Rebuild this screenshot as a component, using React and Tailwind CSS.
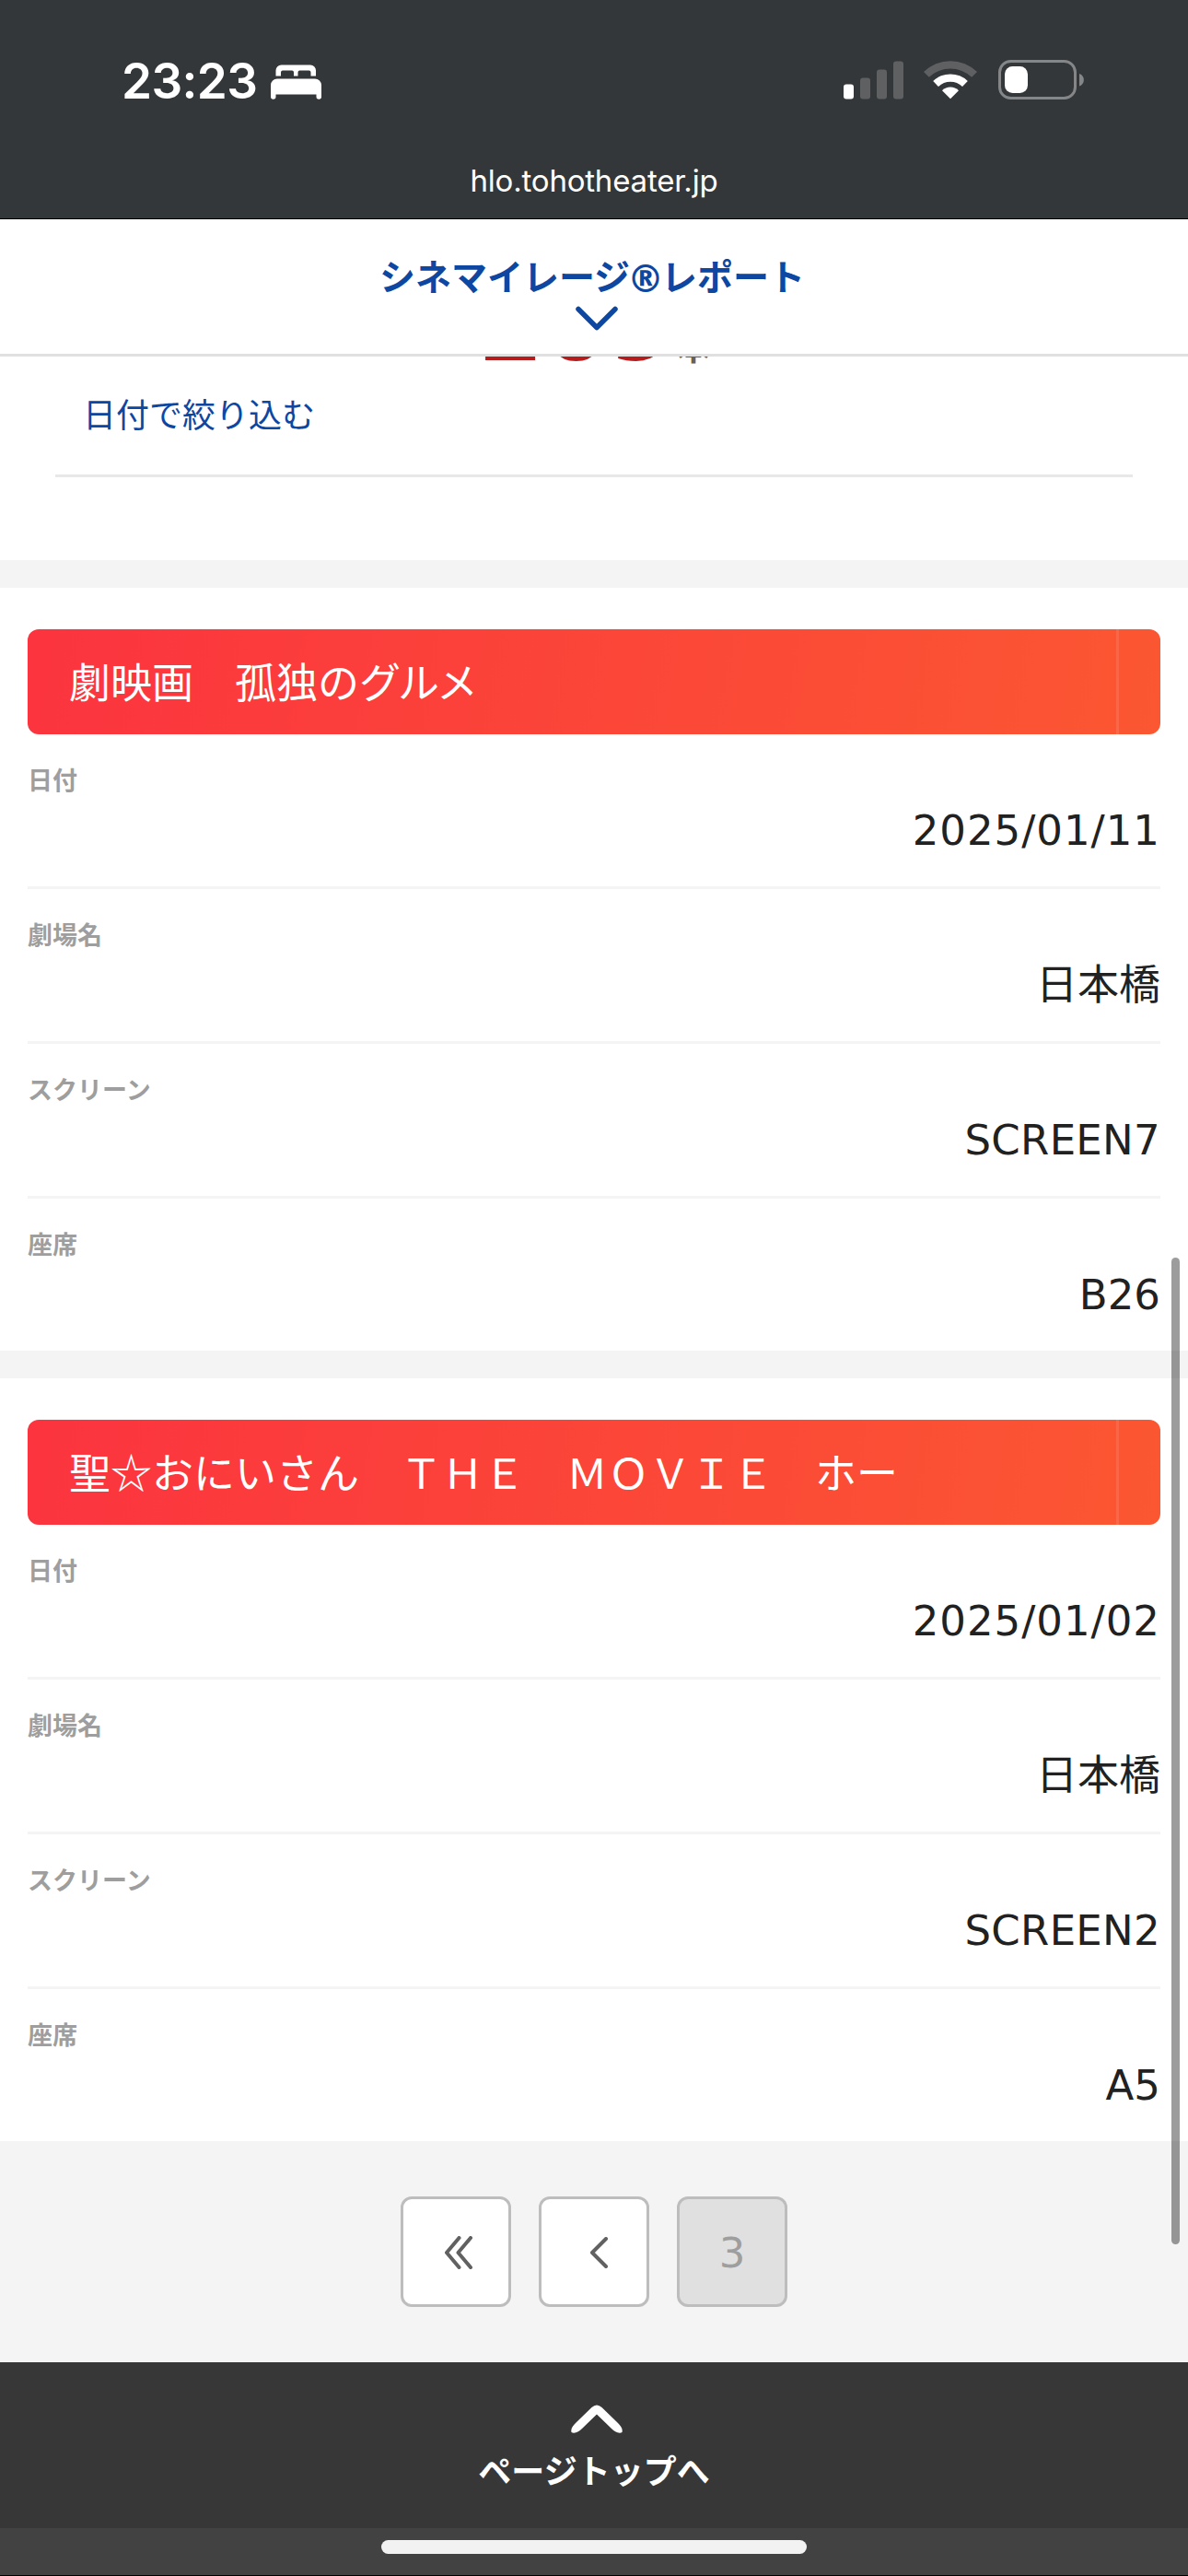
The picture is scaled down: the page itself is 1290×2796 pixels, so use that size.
import React from 'react';

const movies = [
  {
    title: '劇映画　孤独の',
    titleEnd: 'グルメ',
    rows: [
      { label: '日付', value: '2025/01/11', tracking: 'tracking-[1px]' },
      { label: '劇場名', value: '日本橋' },
      { label: 'スクリーン', value: 'SCREEN7', tracking: 'tracking-[0.3px]' },
      { label: '座席', value: 'B26' },
    ],
  },
  {
    title: '聖☆おにいさん　ＴＨＥ　ＭＯＶＩＥ　ホー',
    rows: [
      { label: '日付', value: '2025/01/02', tracking: 'tracking-[1px]' },
      { label: '劇場名', value: '日本橋' },
      { label: 'スクリーン', value: 'SCREEN2', tracking: 'tracking-[0.3px]' },
      { label: '座席', value: 'A5' },
    ],
  },
];

const BedIcon = () => (
  <svg width="55" height="38" viewBox="0 0 55 38" fill="#fff">
    <path d="M5.500 12.500V6.500A6 6 0 0 1 11.500 .5H43A6 6 0 0 1 49 6.500V12.500H43.500V8.500A2 2 0 0 0 41.500 6.500H31.500A2 2 0 0 0 29.500 8.500V12.500H25V8.500A2 2 0 0 0 23 6.500H13A2 2 0 0 0 11 8.500V12.500Z" />
    <path d="M0 22.500A7 7 0 0 1 7 15.500H48A7 7 0 0 1 55 22.500V35A2.500 2.500 0 0 1 49.500 35V32.500H5.500V35A2.500 2.500 0 0 1 0 35Z" />
  </svg>
);

const SignalIcon = () => (
  <svg width="65" height="42" viewBox="0 0 65 42">
    <rect x="0" y="25.500" width="11" height="16" rx="3" fill="#fff" />
    <rect x="18" y="18.500" width="11" height="23" rx="3" fill="#5f6062" />
    <rect x="36" y="9.500" width="11" height="32" rx="3" fill="#5f6062" />
    <rect x="54" y="0.500" width="11" height="41" rx="3" fill="#5f6062" />
  </svg>
);

const WifiIcon = () => (
  <svg width="58" height="43" viewBox="0 0 58 43">
    <path d="M0 13A41.500 41.500 0 0 1 58 13L52.200 18.800A33.500 33.500 0 0 0 5.800 18.800Z" fill="#5f6062" />
    <path d="M10.200 23A27 27 0 0 1 47.800 23L42 29A19 19 0 0 0 16 29Z" fill="#fff" />
    <path d="M20 33.200A13 13 0 0 1 38 33.200L29 42.300Z" fill="#fff" />
  </svg>
);

const BatteryIcon = () => (
  <svg width="94" height="43" viewBox="0 0 94 43">
    <rect x="1.500" y="1.500" width="82" height="40" rx="12" fill="none" stroke="#848688" strokeWidth="3" />
    <rect x="7" y="7" width="25" height="29" rx="8.500" fill="#fff" />
    <path d="M88 15C94.500 17 94.500 26.500 88 28.500Z" fill="#848688" />
  </svg>
);

const MovieCard = ({ title, titleEnd, rows }) => (
  <section className="bg-white px-[30px] pt-[45px]">
    <div className="flex h-[114px] justify-between overflow-hidden rounded-xl bg-[linear-gradient(100deg,#fb343f,#fb5732)] pl-[45px]">
      <h2 className="text-[45px] leading-[112px] whitespace-pre text-white">
        {title}
        {titleEnd && <span className="tracking-[-3px]">{titleEnd}</span>}
      </h2>
      <div className="w-12 border-l-[3px] border-white/10" />
    </div>
    <dl>
      {rows.map((row) => (
        <div
          key={row.label}
          className="h-[168px] border-b-[3px] border-[#f4f4f4] pt-7 last:h-[165px] last:border-b-0"
        >
          <dt className="text-[27px] leading-[41px] font-bold text-[#9e9e9e]">{row.label}</dt>
          <dd
            className={`mt-0.5 text-right font-['DejaVu_Sans','Noto_Sans_CJK_JP',sans-serif] text-[45px] leading-[68px] text-[#212121] ${row.tracking || ''}`}
          >
            {row.value}
          </dd>
        </div>
      ))}
    </dl>
  </section>
);

const App = () => {
  return (
    <div className="relative flex h-[2796px] w-[1290px] flex-col overflow-hidden bg-[#f4f4f4] font-['Noto_Sans_CJK_JP',sans-serif]">
      {/* Status bar */}
      <div className="h-[238px] border-b border-black bg-[#343739] font-[Inter,sans-serif] text-white">
        <div className="flex h-[173px] items-center justify-between pr-[112px] pl-[132px]">
          <div className="flex items-center gap-[15px] pt-1">
            <span className="text-[53px] leading-none font-semibold tracking-[-0.6px]">23:23</span>
            <BedIcon />
          </div>
          <div className="flex items-center">
            <SignalIcon />
            <div className="ml-[22px]"><WifiIcon /></div>
            <div className="ml-[23px]"><BatteryIcon /></div>
          </div>
        </div>
        <p className="text-center text-[33px] leading-[46px] tracking-[-0.2px]">hlo.tohotheater.jp</p>
      </div>

      {/* Page header */}
      <header className="flex h-[149px] flex-col items-center border-b-[3px] border-[#e0e0e0] bg-white pt-[31px] text-[#0d47a1]">
        <h1 className="mr-1 flex h-[58px] items-center text-[39px] leading-[58px] font-bold">
          <span>シネマイレージ</span>
          <span className="flex w-[34px] justify-center pt-2.5 font-['DejaVu_Sans',sans-serif] text-[40px] leading-none">®</span>
          <span>レポート</span>
        </h1>
        <svg className="mt-[5px] ml-1.5" width="46" height="27" viewBox="0 0 46 27" fill="none" stroke="currentColor" strokeWidth="5.500" strokeLinecap="round" strokeLinejoin="round">
          <path d="M3 3.500L23 23.500L43 3.500" />
        </svg>
      </header>

      {/* Summary */}
      <section className="h-[221px] bg-white px-[60px]">
        <div className="flex h-2.5 items-end justify-center overflow-hidden">
          <p className="-mb-[10px] font-['DejaVu_Sans','Noto_Sans_CJK_JP',sans-serif] text-[102px] leading-none font-bold text-[#b71c1c]">
            209<span className="ml-[3px] text-[36px] text-[#616161]">本</span>
          </p>
        </div>
        <div className="h-[121px] border-b-[3px] border-[#e8e8e8] px-[30px] pt-6">
          <a href="#" className="block text-[36px] leading-[54px] text-[#0d47a1]">日付で絞り込む</a>
        </div>
      </section>

      {/* Viewing history */}
      <main className="mt-[30px] flex flex-col gap-[30px]">
        {movies.map((movie) => (
          <MovieCard key={movie.title} {...movie} />
        ))}
      </main>

      {/* Pagination */}
      <nav className="flex h-[240px] items-center justify-center gap-[30px]">
        <button className="flex size-[120px] items-center justify-center rounded-xl border-[3px] border-[#bdbdbd] bg-white">
          <svg className="mt-0.5 ml-1.5" width="30" height="36" viewBox="0 0 30 36" fill="none" stroke="#616161" strokeWidth="4" strokeLinecap="round" strokeLinejoin="round">
            <path d="M15.500 2L2 18L15.500 34M28 2L14.500 18L28 34" />
          </svg>
        </button>
        <button className="flex size-[120px] items-center justify-center rounded-xl border-[3px] border-[#bdbdbd] bg-white">
          <svg className="mt-0.5 ml-[11px]" width="19" height="34" viewBox="0 0 19 34" fill="none" stroke="#616161" strokeWidth="4" strokeLinecap="round" strokeLinejoin="round">
            <path d="M17 2L2 17L17 32" />
          </svg>
        </button>
        <span className="flex size-[120px] items-center justify-center rounded-xl border-[3px] border-[#bdbdbd] bg-[#e0e0e0] pt-1 font-['DejaVu_Sans',sans-serif] text-[45px] text-[#9e9e9e]">
          3
        </span>
      </nav>

      {/* Back to top */}
      <footer className="flex h-[180px] flex-col items-center bg-[#373737] pt-[46px] text-white">
        <svg className="ml-1.5" width="56" height="31" viewBox="0 0 56 31" fill="#fff">
          <path d="M.5 30C-.5 26 2 23 5 20L22.500 3Q28-2 33.500 3L51 20C54 23 56.500 26 55.500 30C52 32 47 29 44 26L28 10.500L12 26C9 29 4 32 .5 30Z" />
        </svg>
        <span className="mt-3 text-[36px] leading-[54px] font-bold">ページトップへ</span>
      </footer>
      <div className="flex h-[52px] justify-center border-b border-black bg-[#424242] pt-[13px]">
        <div className="h-[15px] w-[462px] rounded-full bg-[#f2f2f2]" />
      </div>

      {/* Scroll indicator */}
      <div className="absolute top-[1365px] right-[9px] h-[1071px] w-[9px] rounded-full bg-black/39" />
    </div>
  );
};

export default App;
